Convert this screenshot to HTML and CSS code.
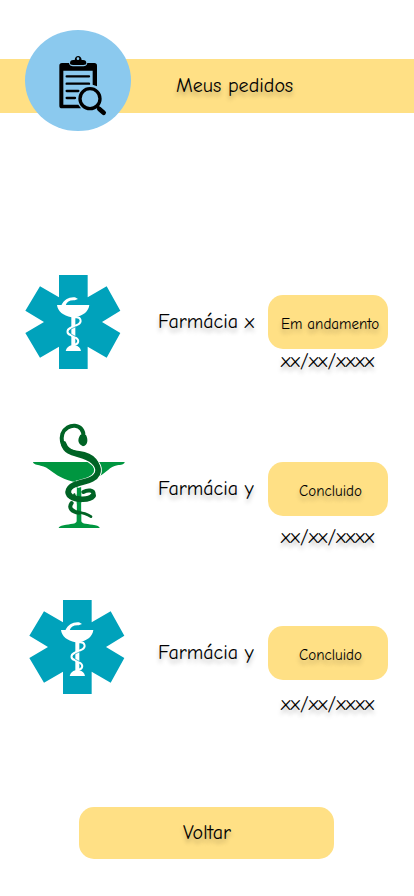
FILE: index.html
```html
<!DOCTYPE html>
<html lang="pt">
<head>
<meta charset="utf-8">
<meta name="viewport" content="width=device-width, initial-scale=1">
<title>Meus pedidos</title>
<link rel="stylesheet" href="styles.css">
</head>
<body>
<svg width="0" height="0" class="defs" aria-hidden="true">
  <symbol id="star" viewBox="0 0 330 315">
    <path fill="#00a2bb" d="M117 15H203V82L260 49 301 122 246 156 301 189 260 263 203 230V297H117V230L60 263 16 189 72 156 16 122 60 49 117 82Z"/>
    <path fill="#fff" d="M111 105H208C206 124 190 137 166 142V226Q180 229 183 243H137Q141 229 154 226V142C130 137 113 124 111 105Z"/>
    <path fill="#fff" d="M124 106C132 88 148 80 165 82L174 87 164 91C149 90 141 95 137 106Z"/>
    <path fill="none" stroke="#fff" stroke-width="6" stroke-linecap="round" d="M166 142C184 140 187 157 173 164L151 174C139 180 140 192 152 195L169 204C179 212 175 222 163 224"/>
    <path fill="none" stroke="#00a2bb" stroke-width="2" d="M153 177L168 170M153 192L168 200"/>
  </symbol>
</svg>
<header class="header">
  <div class="badge">
    <svg viewBox="0 0 360 330" width="120" height="110">
      <path fill-rule="evenodd" d="M150 115Q150 105 160 105H164C165 89 184 89 185 105H189Q199 105 199 115Q199 120 190 120H159Q150 120 150 115ZM174 97A4 4 0 1 0 174 105A4 4 0 1 0 174 97Z"/>
      <path d="M126 114H147Q149 124 159 124H190Q200 124 202 114H223Q231 114 231 122V184L218 179V137H130V239H175L183 250H126Q118 250 118 242V122Q118 114 126 114Z"/>
      <path class="line" stroke-width="7" d="M140 154H207M140 176H207M140 198H175M140 219H165"/>
      <circle cx="210" cy="221" r="37" fill="#8bc9ee"/>
      <circle cx="210" cy="221" r="30" class="line" stroke-width="10"/>
      <path class="line" stroke-width="9" d="M230 243L240 252"/>
      <path class="line" stroke-width="14" d="M238 252L251 263"/>
    </svg>
  </div>
  <h1 class="title">Meus pedidos</h1>
</header>
<main class="orders">
  <section class="order first">
    <svg class="logo" width="110" height="105"><use href="#star"/></svg>
    <span class="name">Farmácia x</span>
    <div class="info"><span class="status busy">Em andamento</span><span class="date">xx/xx/xxxx</span></div>
  </section>
  <section class="order second">
    <svg class="logo" viewBox="0 0 330 360" width="110" height="120">
      <path fill="#009640" d="M24 141H299C298 149 288 149 277 151C253 155 246 173 221 185C202 196 183 198 169 201V318C169 328 190 326 211 331Q224 334 224 339H101Q101 334 116 331C136 326 155 328 155 318V201C138 199 121 194 105 185C81 173 72 157 47 152C36 149 26 149 24 141Z"/>
      <path class="edge" d="M176 123C211 135 225 158 217 176C207 197 182 201 155 208"/>
      <path class="snake" stroke-width="12" d="M175 65C179 24 125 22 112 57C102 94 132 111 163 114C205 119 226 146 218 177"/>
      <path class="snake" stroke-width="17" d="M116 87C124 115 151 114 176 123C211 135 225 158 217 176C207 197 182 197 158 206C127 214 124 234 137 244C156 257 194 255 204 242"/>
      <path class="snake" stroke-width="12" d="M175 231C189 223 206 225 206 237"/>
      <path class="snake" stroke-width="12" d="M140 264C129 279 141 290 162 293"/>
      <path class="snake" stroke-width="8" d="M156 292Q182 293 198 305"/>
      <path fill="#006325" d="M166 59L183 60C190 73 189 91 174 94C159 85 156 76 166 59ZM144 237L150 234 153 244 147 243Z"/>
      <path fill="none" stroke="#fff" stroke-width="2" d="M154 218V237M170 216V227M154 266V286M170 264V288"/>
    </svg>
    <span class="name">Farmácia y</span>
    <div class="info"><span class="status">Concluido</span><span class="date">xx/xx/xxxx</span></div>
  </section>
  <section class="order third">
    <svg class="logo" width="110" height="105"><use href="#star"/></svg>
    <span class="name">Farmácia y</span>
    <div class="info"><span class="status">Concluido</span><span class="date">xx/xx/xxxx</span></div>
  </section>
</main>
<button class="back">Voltar</button>
</body>
</html>
```
FILE: styles.css
```css
* { box-sizing: border-box; }
body {
  margin: 0;
  min-height: 896px;
  background: #fff;
  color: #000;
  font: 400 20px/24px "Comic Neue", Lato, sans-serif;
  font-variant-ligatures: none;
  text-shadow: 0 4px 4px rgba(0, 0, 0, .25);
}
.defs { display: block; }
.header {
  display: flex;
  align-items: center;
  height: 54px;
  margin-top: 59px;
  padding-left: 25px;
  background: #ffe085;
}
.badge {
  display: flex;
  justify-content: center;
  flex: none;
  width: 106px;
  height: 101px;
  margin-top: -11px;
  border-radius: 50%;
  background: #8bc9ee;
}
.badge svg { flex: none; margin: -5px 0 0 4px; }
.line { fill: none; stroke: #000; stroke-linecap: round; }
.edge { fill: none; stroke: #fff; stroke-width: 23; }
.snake { fill: none; stroke: #006325; stroke-linecap: round; }
.title {
  margin: 0 0 0 45px;
  font: inherit;
  white-space: nowrap;
}
.orders { padding-top: 157px; }
.order {
  display: grid;
  grid-template-columns: 158px 110px 120px;
  align-items: start;
}
.first { height: 145px; }
.second { height: 180px; }
.third { height: 212px; }
.logo { margin-left: 20px; }
.second .logo { margin-left: 25px; }
.third .logo { margin-left: 24px; }
.name { padding-top: 40px; white-space: nowrap; }
.second .name { padding-top: 62px; }
.third .name { padding-top: 46px; }
.info { display: flex; flex-direction: column; padding-top: 25px; }
.second .info { padding-top: 47px; }
.third .info { padding-top: 31px; }
.status {
  display: flex;
  align-items: center;
  justify-content: center;
  height: 54px;
  padding: 4px 0 0 5px;
  border-radius: 15px;
  background: #ffe085;
  font-size: 15px;
  white-space: nowrap;
}
.busy { padding-left: 4px; }
.date { margin-left: 13px; }
.second .date { margin-top: 9px; }
.third .date { margin-top: 12px; }
.back {
  display: block;
  width: 255px;
  height: 52px;
  margin-left: 79px;
  padding: 0 0 0 1px;
  border: 0;
  border-radius: 15px;
  background: #ffe085;
  color: inherit;
  font: inherit;
  text-shadow: inherit;
}
```
